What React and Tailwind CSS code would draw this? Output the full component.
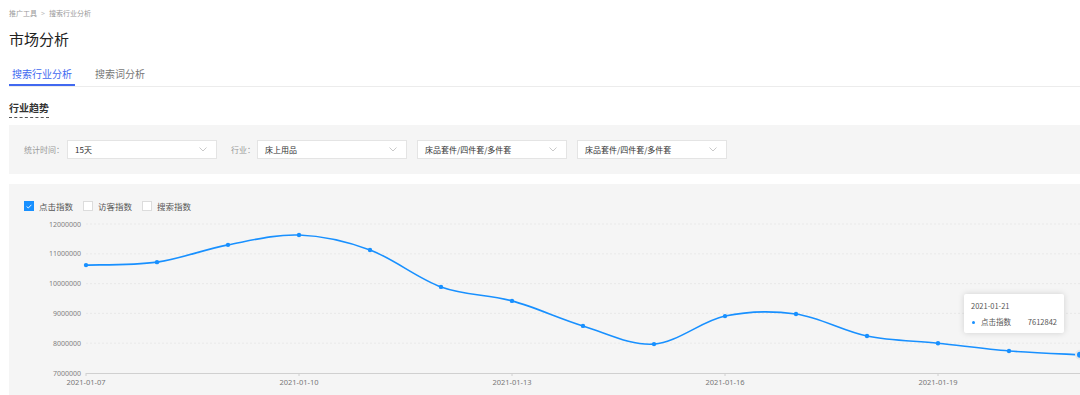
const font = "font-['Noto_Sans_CJK_SC','Noto_Sans',sans-serif]";

const values = [
  10620000, 10720000, 11300000, 11630000, 11130000, 9890000, 9420000, 8580000,
  7970000, 8910000, 8980000, 8240000, 8000000, 7740000, 7612842,
];

const px = (i) => 77 + 71 * i;
const py = (v) => 162 - ((v - 7000000) / 1000000) * 29.8;

function smoothPath(pts) {
  let d = `M${pts[0][0]},${pts[0][1]}`;
  for (let i = 0; i < pts.length - 1; i++) {
    const p0 = pts[i - 1] || pts[i];
    const p1 = pts[i];
    const p2 = pts[i + 1];
    const p3 = pts[i + 2] || p2;
    const t = 0.5 / 3;
    const c1 = [p1[0] + (p2[0] - p0[0]) * t, p1[1] + (p2[1] - p0[1]) * t];
    const c2 = [p2[0] - (p3[0] - p1[0]) * t, p2[1] - (p3[1] - p1[1]) * t];
    d += ` C${c1[0]},${c1[1]} ${c2[0]},${c2[1]} ${p2[0]},${p2[1]}`;
  }
  return d;
}

function Chevron() {
  return (
    <svg width="8" height="5" viewBox="0 0 8 5" className="shrink-0">
      <path d="M0.5 0.5 L4 4 L7.5 0.5" fill="none" stroke="#bbb" strokeWidth="0.8" />
    </svg>
  );
}

function Select({ value }) {
  return (
    <div className="w-[150px] h-[19px] bg-white border border-[#e4e4e4] flex items-center justify-between pl-[7px] pr-[9px]">
      <span className="text-[8px] leading-none text-[#333]">{value}</span>
      <Chevron />
    </div>
  );
}

function Check({ checked, label }) {
  return (
    <div className="flex items-center mr-[10px]">
      {checked ? (
        <div className="w-[10px] h-[10px] bg-[#1890ff] flex items-center justify-center">
          <svg width="6" height="5" viewBox="0 0 6 5">
            <path d="M0.6 2.5 L2.3 4 L5.4 0.8" fill="none" stroke="#fff" strokeWidth="0.9" />
          </svg>
        </div>
      ) : (
        <div className="w-[10px] h-[10px] bg-white border border-[#dcdcdc]" />
      )}
      <span className="ml-[5px] text-[8.5px] leading-none text-[#555]">{label}</span>
    </div>
  );
}

function Chart() {
  const pts = values.map((v, i) => [px(i), py(v)]);
  const grid = [12000000, 11000000, 10000000, 9000000, 8000000];
  const labels = [0, 3, 6, 9, 12];
  const dates = ["2021-01-07", "2021-01-10", "2021-01-13", "2021-01-16", "2021-01-19"];
  return (
    <svg width="1071" height="184" className="block">
      {grid.map((g) => (
        <line
          key={g}
          x1="77"
          x2="1071"
          y1={py(g)}
          y2={py(g)}
          stroke="#e6e6e6"
          strokeWidth="0.8"
          strokeDasharray="2 2"
        />
      ))}
      {[12000000, 11000000, 10000000, 9000000, 8000000, 7000000].map((g) => (
        <text
          key={g}
          x="72"
          y={py(g) + 2.5}
          textAnchor="end"
          fontSize="7"
          fill="#808080"
          fontFamily="'Noto Sans','Liberation Sans',sans-serif"
        >
          {g}
        </text>
      ))}
      <line x1="77" x2="1071" y1="162.5" y2="162.5" stroke="#d0d0d0" strokeWidth="1" />
      {labels.map((i, k) => (
        <g key={i}>
          <line x1={px(i)} x2={px(i)} y1="162" y2="165" stroke="#d0d0d0" strokeWidth="1" />
          <text
            x={px(i)}
            y="173.5"
            textAnchor="middle"
            fontSize="7.5"
            fill="#777"
            fontFamily="'Noto Sans','Liberation Sans',sans-serif"
          >
            {dates[k]}
          </text>
        </g>
      ))}
      <path d={smoothPath(pts)} fill="none" stroke="#1890ff" strokeWidth="1.6" />
      {pts.slice(0, -1).map((p, i) => (
        <circle key={i} cx={p[0]} cy={p[1]} r="2.2" fill="#1890ff" />
      ))}
      <circle cx={pts[14][0]} cy={pts[14][1]} r="5" fill="#e8e8e8" />
      <circle cx={pts[14][0]} cy={pts[14][1]} r="3" fill="#1890ff" />
    </svg>
  );
}

export default function App() {
  return (
    <div className={`${font} bg-white w-[1080px] h-[395px] overflow-hidden pl-[9px]`}>
      {/* 面包屑 */}
      <div className="h-[26px] flex items-center text-[7px] leading-none text-[#999]">
        <span>推广工具</span>
        <span className="mx-[4px] text-[#bbb]">&gt;</span>
        <span>搜索行业分析</span>
      </div>

      <div className="h-[24px] flex items-center text-[15px] leading-none text-[#222]">市场分析</div>

      {/* Tabs */}
      <div className="flex items-end pt-[18px] border-b border-[#ececec]">
        <div className="px-[3px] pb-[4px] border-b-2 border-[#4169f0] text-[10px] leading-[12px] text-[#4169f0]">
          搜索行业分析
        </div>
        <div className="ml-[20px] pb-[6px] text-[10px] leading-[12px] text-[#777]">搜索词分析</div>
      </div>

      <div className="mt-[15px] inline-block pb-[3px] border-b border-dashed border-[#555] text-[10px] leading-[12px] font-bold text-[#333]">
        行业趋势
      </div>

      {/* 筛选 */}
      <div className="mt-[7px] h-[49px] bg-[#f5f5f5] flex items-center pl-[15px]">
        <span className="text-[8px] leading-none text-[#999] mr-[3px]">统计时间：</span>
        <Select value="15天" />
        <span className="ml-[14px] text-[8px] leading-none text-[#999] mr-[2px]">行业：</span>
        <Select value="床上用品" />
        <div className="ml-[10px]">
          <Select value="床品套件/四件套/多件套" />
        </div>
        <div className="ml-[10px]">
          <Select value="床品套件/四件套/多件套" />
        </div>
      </div>

      {/* 图表 */}
      <div className="relative mt-[10px] h-[211px] bg-[#f5f5f5]">
        <div className="flex items-center pt-[17px] pl-[15px] h-[27px]">
          <Check checked label="点击指数" />
          <Check label="访客指数" />
          <Check label="搜索指数" />
        </div>
        <Chart />

        <div className="absolute left-[955px] top-[110px] w-[100px] h-[39px] bg-white shadow-[0_0_6px_rgba(0,0,0,0.15)] rounded-[2px] px-[7px] pt-[7px]">
          <div className="text-[7.5px] leading-[10px] text-[#555]">2021-01-21</div>
          <div className="mt-[6px] flex items-center text-[7.5px] leading-[10px] text-[#555]">
            <span className="w-[3px] h-[3px] rounded-full bg-[#1890ff] ml-[1px] mr-[6px]" />
            <span>点击指数</span>
            <span className="ml-auto">7612842</span>
          </div>
        </div>
      </div>
    </div>
  );
}
